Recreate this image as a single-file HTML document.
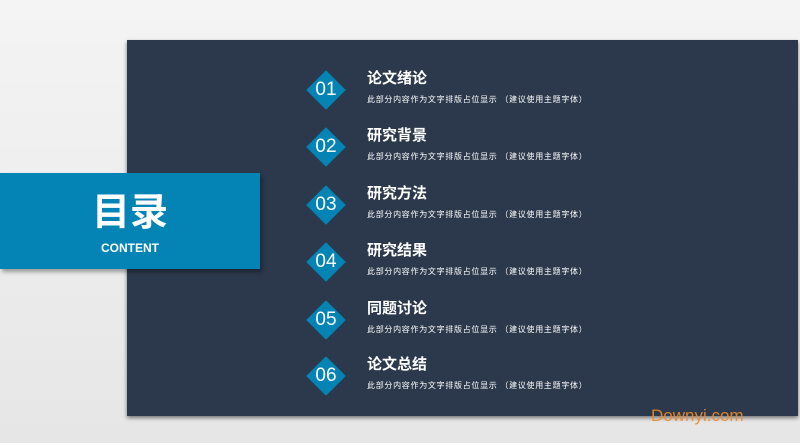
<!DOCTYPE html>
<html><head><meta charset="utf-8"><style>
body{margin:0;width:800px;height:443px;overflow:hidden;background:linear-gradient(#f4f4f4,#e6e6e6);font-family:"Liberation Sans","Noto Sans CJK SC",sans-serif;position:relative}
.panel{position:absolute;left:127px;top:40px;width:671px;height:376px;background:#2c384b;box-shadow:0 2px 4px rgba(0,0,0,.5)}
.blue{position:absolute;left:0;top:173px;width:260px;height:96px;background:#0384b5;box-shadow:2px 3px 4px rgba(0,0,0,.35);color:#fff;text-align:center}
.blue .t{font-size:38px;font-weight:bold;margin-top:18px;line-height:44px}
.blue .s{font-size:12px;font-weight:bold;margin-top:6px}
.d{position:absolute;left:312px;width:28px;height:28px;background:#0384b5;transform:rotate(45deg)}
.n{position:absolute;left:306px;width:40px;text-align:center;color:#fff;font-size:19px;line-height:20px}
.h{position:absolute;left:367px;color:#fff;font-size:15px;font-weight:bold}
.p{position:absolute;left:367px;color:#fff;font-size:8px;letter-spacing:.7px}
.w{position:absolute;left:651px;top:406px;color:#f08a24;font-size:17px;opacity:.9}
</style></head><body>
<div class="panel"></div>
<div class="blue"><div class="t">目录</div><div class="s">CONTENT</div></div>
<div class="d" style="top:76px"></div><div class="n" style="top:80px">01</div><div class="h" style="top:67px">论文绪论</div><div class="p" style="top:94px">此部分内容作为文字排版占位显示 （建议使用主题字体）</div>
<div class="d" style="top:133px"></div><div class="n" style="top:137px">02</div><div class="h" style="top:124px">研究背景</div><div class="p" style="top:151px">此部分内容作为文字排版占位显示 （建议使用主题字体）</div>
<div class="d" style="top:191px"></div><div class="n" style="top:195px">03</div><div class="h" style="top:182px">研究方法</div><div class="p" style="top:209px">此部分内容作为文字排版占位显示 （建议使用主题字体）</div>
<div class="d" style="top:248px"></div><div class="n" style="top:252px">04</div><div class="h" style="top:239px">研究结果</div><div class="p" style="top:266px">此部分内容作为文字排版占位显示 （建议使用主题字体）</div>
<div class="d" style="top:306px"></div><div class="n" style="top:310px">05</div><div class="h" style="top:297px">同题讨论</div><div class="p" style="top:324px">此部分内容作为文字排版占位显示 （建议使用主题字体）</div>
<div class="d" style="top:362px"></div><div class="n" style="top:366px">06</div><div class="h" style="top:353px">论文总结</div><div class="p" style="top:380px">此部分内容作为文字排版占位显示 （建议使用主题字体）</div>
<div class="w">Downyi.com</div>
</body></html>
